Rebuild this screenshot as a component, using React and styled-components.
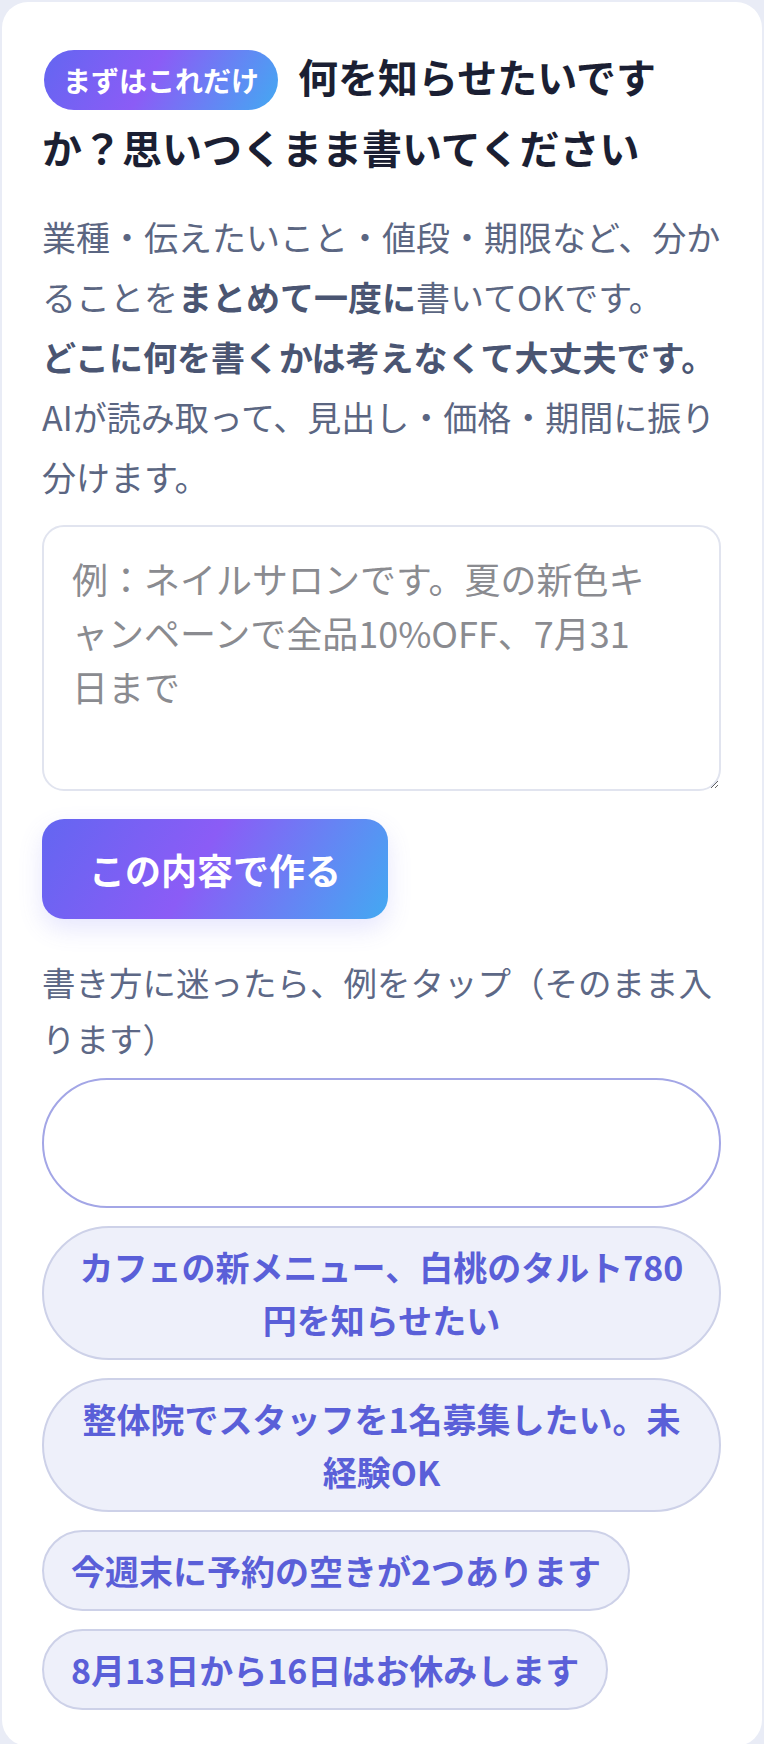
import React, { useState } from "react";
import styled, { createGlobalStyle } from "styled-components";

const GlobalStyle = createGlobalStyle`
  html, body {
    margin: 0;
    padding: 0;
    background: #e9ecf6;
  }
  body {
    font-family: "Noto Sans CJK JP", "Noto Sans", sans-serif;
  }
  * { box-sizing: border-box; }
`;

const examples = [
  "カフェの新メニュー、白桃のタルト780円を知らせたい",
  "整体院でスタッフを1名募集したい。未経験OK",
  "今週末に予約の空きが2つあります",
  "8月13日から16日はお休みします",
];

const App = () => {
  const [text, setText] = useState("");

  return (
    <Page>
      <GlobalStyle />
      <Card>
        <Title>
          <Badge>まずはこれだけ</Badge>何を知らせたいですか？思いつくまま書いてください
        </Title>

        <Lead>
          業種・伝えたいこと・値段・期限など、分かることを<strong>まとめて一度に</strong>書いてOKです。
          <br />
          <strong>どこに何を書くかは考えなくて大丈夫です。</strong>
          <br />
          AIが読み取って、見出し・価格・期間に振り分けます。
        </Lead>

        <Input
          value={text}
          onChange={(e) => setText(e.target.value)}
          placeholder="例：ネイルサロンです。夏の新色キャンペーンで全品10%OFF、7月31日まで"
        />

        <SubmitButton type="button">この内容で作る</SubmitButton>

        <Hint>書き方に迷ったら、例をタップ（そのまま入ります）</Hint>

        <ChipList>
          <Chip type="button" $blank aria-label="例" />
          {examples.map((item, i) => (
            <Chip key={i} type="button" onClick={() => setText(item)}>
              {item}
            </Chip>
          ))}
        </ChipList>
      </Card>
    </Page>
  );
};

const Page = styled.div`
  padding: 2px;
  min-height: 1744px;
`;

const Card = styled.section`
  background: #ffffff;
  border-radius: 26px;
  min-height: 1740px;
  padding: 41px 41px 36px 40px;
`;

const Title = styled.h2`
  margin: 0;
  font-size: 40px;
  line-height: 66px;
  font-weight: 700;
  color: #1b1f33;
`;

const Badge = styled.span`
  display: inline-block;
  vertical-align: middle;
  margin: 0 20px 4px 2px;
  padding: 11px 19px;
  border-radius: 999px;
  font-size: 28px;
  line-height: 38px;
  font-weight: 700;
  color: #ffffff;
  background: linear-gradient(120deg, #6366f1 0%, #8b5cf6 45%, #43a9f2 100%);
`;

const Lead = styled.p`
  margin: 27px 0 18px;
  font-size: 34px;
  line-height: 60px;
  color: #5b6682;

  strong {
    font-weight: 700;
    color: #4a5572;
  }
`;

const Input = styled.textarea`
  display: block;
  width: 100%;
  height: 266px;
  padding: 24px 68px 24px 28px;
  border: 2px solid #e1e4ef;
  border-radius: 22px;
  font-family: inherit;
  font-size: 36px;
  line-height: 54px;
  line-break: loose;
  color: #1b1f33;
  background: #ffffff;
  resize: vertical;
  outline: none;

  &::placeholder {
    color: #8a8b90;
    line-break: loose;
  }
`;

const SubmitButton = styled.button`
  display: block;
  margin-top: 28px;
  padding: 23px 47px;
  border: none;
  border-radius: 22px;
  font-family: inherit;
  font-size: 36px;
  line-height: 54px;
  font-weight: 700;
  color: #ffffff;
  background: linear-gradient(120deg, #6366f1 0%, #8b5cf6 45%, #43a9f2 100%);
  box-shadow: 0 10px 24px rgba(99, 102, 241, 0.16);
  cursor: pointer;
`;

const Hint = styled.p`
  margin: 35px 0 12px;
  font-size: 33.5px;
  line-height: 56px;
  color: #5d6886;
`;

const ChipList = styled.div`
  display: flex;
  flex-wrap: wrap;
  gap: 18px;
`;

const Chip = styled.button`
  max-width: 100%;
  width: ${(p) => (p.$blank ? "100%" : "auto")};
  min-height: ${(p) => (p.$blank ? "130px" : "0")};
  padding: 12px 27px;
  border: 2px solid ${(p) => (p.$blank ? "#a3a6e6" : "#cdd1e8")};
  border-radius: 999px;
  background: ${(p) => (p.$blank ? "#ffffff" : "#eef0fa")};
  font-family: inherit;
  font-size: 34px;
  line-height: 53px;
  font-weight: 700;
  color: #5a5fd8;
  text-align: center;
  cursor: pointer;
`;

export default App;
